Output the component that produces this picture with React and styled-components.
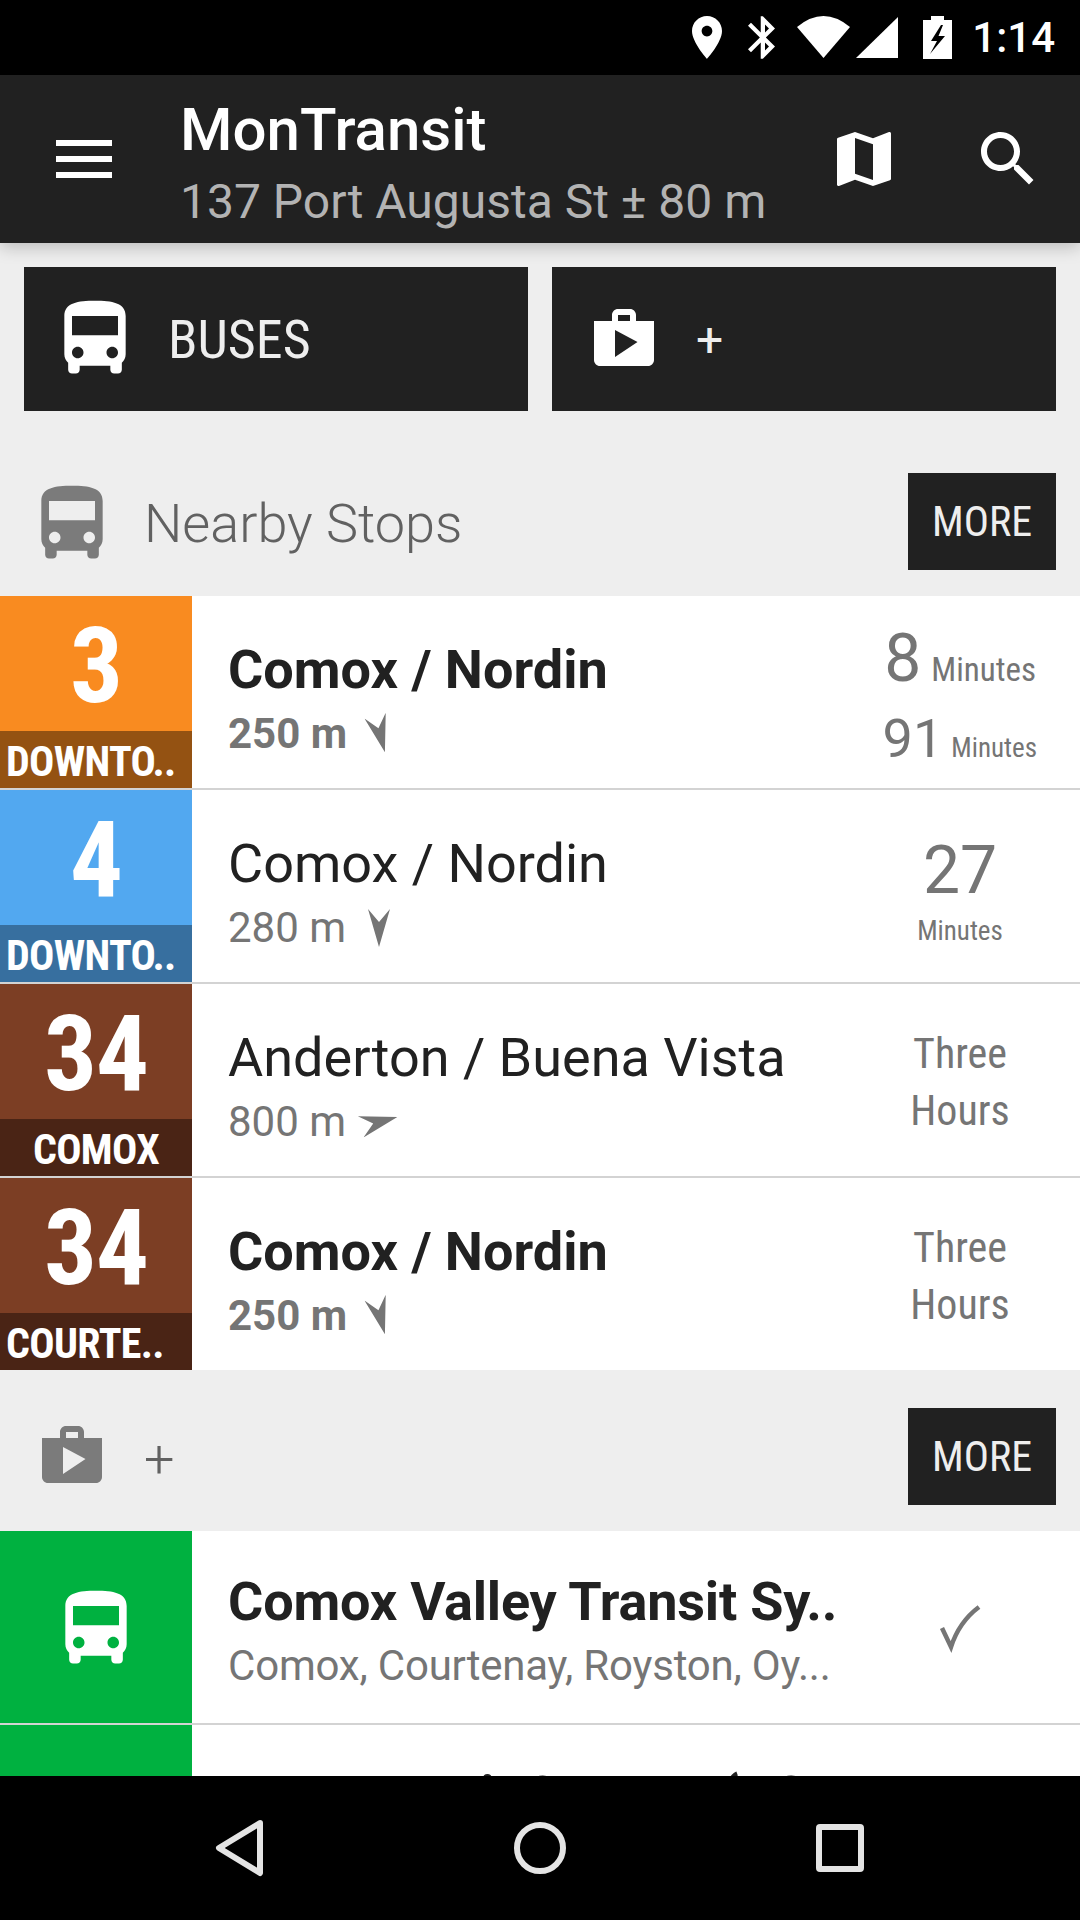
import React from "react";
import styled, { createGlobalStyle } from "styled-components";

const busPath =
  "M4 16c0 .88.39 1.67 1 2.22V20c0 .55.45 1 1 1h1c.55 0 1-.45 1-1v-1h8v1c0 .55.45 1 1 1h1c.55 0 1-.45 1-1v-1.78c.61-.55 1-1.34 1-2.22V6c0-3.5-3.58-4-8-4s-8 .5-8 4v10zm3.5 1c-.83 0-1.5-.67-1.5-1.5S6.67 14 7.5 14s1.5.67 1.5 1.5S8.33 17 7.5 17zm9 0c-.83 0-1.5-.67-1.5-1.5s.67-1.5 1.5-1.5 1.5.67 1.5 1.5-.67 1.5-1.5 1.5zm1.5-6H6V6h12v5z";
const shopPath =
  "M16 6V4c0-1.11-.89-2-2-2h-4c-1.11 0-2 .89-2 2v2H2v13c0 1.11.89 2 2 2h16c1.11 0 2-.89 2-2V6h-6zm-6-2h4v2h-4V4zM9 18V9l7.5 4L9 18z";

function BusIcon({ color }) {
  return (
    <svg width="92" height="92" viewBox="0 0 24 24" fill={color}>
      <path d={busPath} />
    </svg>
  );
}

function ShopIcon({ color }) {
  return (
    <svg width="72" height="72" viewBox="0 0 24 24" fill={color}>
      <path d={shopPath} />
    </svg>
  );
}

function Arrow({ angle }) {
  return (
    <ArrowSvg $angle={angle} width="22" height="38" viewBox="0 0 22 38" fill="#757575">
      <path d="M0 0 L11 38 L22 0 L11 13 Z" />
    </ArrowSvg>
  );
}

function Row({ route, label, labelAlign, color, dark, title, bold, distance, angle, last, children }) {
  return (
    <RowWrapper $last={last}>
      <RouteCell>
        <RouteNumber $bg={color}>
          <Condensed>{route}</Condensed>
        </RouteNumber>
        <RouteLabel $bg={dark} $align={labelAlign}>
          <Condensed>{label}</Condensed>
        </RouteLabel>
      </RouteCell>
      <RowText>
        <RowTitle $bold={bold}>{title}</RowTitle>
        <RowSub $bold={bold}>
          {distance}
          <Arrow angle={angle} />
        </RowSub>
      </RowText>
      <TimeCell>{children}</TimeCell>
    </RowWrapper>
  );
}

export default function App() {
  return (
    <Page>
      <GlobalStyle />
      <StatusBar>
        <StatusGlyph width="30" height="43" viewBox="5 2 14 20">
          <path d="M12 2C8.13 2 5 5.13 5 9c0 5.25 7 13 7 13s7-7.75 7-13c0-3.87-3.13-7-7-7zm0 9.5c-1.38 0-2.5-1.12-2.5-2.5s1.12-2.5 2.5-2.5 2.5 1.12 2.5 2.5-1.12 2.5-2.5 2.5z" />
        </StatusGlyph>
        <StatusGlyph $gap={26} width="27" height="43" viewBox="5 2 12.71 20">
          <path d="M17.71 7.71L12 2h-1v7.59L6.41 5 5 6.41 10.59 12 5 17.59 6.41 19 11 14.41V22h1l5.71-5.71-4.3-4.29 4.3-4.29zM13 5.83l1.88 1.88L13 9.59V5.83zm1.88 10.46L13 18.17v-3.76l1.88 1.88z" />
        </StatusGlyph>
        <StatusGlyph $gap={22} width="53" height="42" viewBox="0 0 53 42">
          <path d="M0 11 Q26.500 -11 53 11 L26.500 42 Z" />
        </StatusGlyph>
        <StatusGlyph $gap={6} width="42" height="41" viewBox="0 0 42 41">
          <path d="M42 0 V41 H0 Z" />
        </StatusGlyph>
        <StatusGlyph $gap={25} width="29" height="43" viewBox="0 0 29 43">
          <path
            fillRule="evenodd"
            d="M8 0 H21 V4 H29 V43 H0 V4 H8 Z M18 9 L8 25 H14 L7 38 L22 20 H15.500 L20 9 Z"
          />
        </StatusGlyph>
        <Clock>1:14</Clock>
      </StatusBar>

      <Toolbar>
        <MenuIcon>
          <span />
          <span />
          <span />
        </MenuIcon>
        <ToolbarTitles>
          <AppName>MonTransit</AppName>
          <Location>137 Port Augusta St ± 80 m</Location>
        </ToolbarTitles>
        <ToolbarActions>
          <svg width="72" height="72" viewBox="0 0 24 24" fill="#fff">
            <path d="M20.5 3l-.16.03L15 5.100 9 3 3.360 4.900c-.21.07-.36.25-.36.48V20.500c0 .28.22.5.5.5l.16-.03L9 18.900l6 2.100 5.640-1.900c.21-.07.36-.25.36-.48V3.500c0-.28-.22-.5-.5-.5zM15 19l-6-2.110V5l6 2.110V19z" />
          </svg>
          <svg width="72" height="72" viewBox="0 0 24 24" fill="#fff">
            <path d="M15.500 14h-.79l-.28-.27C15.410 12.590 16 11.110 16 9.500 16 5.910 13.090 3 9.500 3S3 5.910 3 9.500 5.910 16 9.500 16c1.610 0 3.090-.59 4.230-1.570l.27.28v.79l5 4.990L20.490 19l-4.990-5zm-6 0C7.010 14 5 11.990 5 9.500S7.010 5 9.500 5 14 7.010 14 9.500 11.990 14 9.500 14z" />
          </svg>
        </ToolbarActions>
      </Toolbar>

      <Content>
        <TypeButtons>
          <TypeButton $pad={25}>
            <BusIcon color="#fff" />
            <TypeLabel>
              <Condensed>BUSES</Condensed>
            </TypeLabel>
          </TypeButton>
          <TypeButton $pad={36}>
            <ShopIcon color="#fff" />
            <TypePlus>+</TypePlus>
          </TypeButton>
        </TypeButtons>

        <SectionHeader>
          <SectionLabel>
            <BusIcon color="#7b7b7b" />
            <SectionTitle>Nearby Stops</SectionTitle>
          </SectionLabel>
          <MoreButton>
            <Condensed>MORE</Condensed>
          </MoreButton>
        </SectionHeader>

        <Row
          route="3"
          label="DOWNTO.."
          color="#f98b20"
          dark="#945212"
          title="Comox / Nordin"
          bold
          distance="250 m"
          angle={-15}
        >
          <TimeLine>
            <BigNumber>8</BigNumber>
            <SmallUnit>
              <Condensed>Minutes</Condensed>
            </SmallUnit>
          </TimeLine>
          <TimeLine $second>
            <SecondNumber>91</SecondNumber>
            <TinyUnit>
              <Condensed>Minutes</Condensed>
            </TinyUnit>
          </TimeLine>
        </Row>
        <Row
          route="4"
          label="DOWNTO.."
          color="#52a8f0"
          dark="#376f9f"
          title="Comox / Nordin"
          distance="280 m"
          angle={0}
        >
          <StackNumber>27</StackNumber>
          <TinyUnit>
            <Condensed>Minutes</Condensed>
          </TinyUnit>
        </Row>
        <Row
          route="34"
          label="COMOX"
          labelAlign="center"
          color="#7c3e24"
          dark="#4a2415"
          title="Anderton / Buena Vista"
          distance="800 m"
          angle={-105}
        >
          <WordTime>
            <Condensed>Three</Condensed>
          </WordTime>
          <WordTime>
            <Condensed>Hours</Condensed>
          </WordTime>
        </Row>
        <Row
          route="34"
          label="COURTE.."
          color="#7c3e24"
          dark="#4a2415"
          title="Comox / Nordin"
          bold
          distance="250 m"
          angle={-15}
          last
        >
          <WordTime>
            <Condensed>Three</Condensed>
          </WordTime>
          <WordTime>
            <Condensed>Hours</Condensed>
          </WordTime>
        </Row>

        <SectionHeader $second>
          <ShopSlot>
            <ShopIcon color="#7b7b7b" />
          </ShopSlot>
          <SectionPlus>+</SectionPlus>
          <MoreButton>
            <Condensed>MORE</Condensed>
          </MoreButton>
        </SectionHeader>

        <RowWrapper>
          <AgencyCell>
            <BusIcon color="#fff" />
          </AgencyCell>
          <RowText $agency>
            <AgencyTitle>Comox Valley Transit Sy..</AgencyTitle>
            <AgencySub>Comox, Courtenay, Royston, Oy...</AgencySub>
          </RowText>
          <TimeCell>
            <svg width="44" height="50" viewBox="0 0 44 50" fill="none" stroke="#757575" strokeWidth="4.500">
              <path d="M4 24 L13 43 Q21 18 41 3" />
            </svg>
          </TimeCell>
        </RowWrapper>
        <RowWrapper>
          <AgencyCell />
          <RowText $agency>
            <AgencyTitle>BBU Transit System (BC</AgencyTitle>
            <AgencySub>Comox, Courtenay</AgencySub>
          </RowText>
          <TimeCell />
        </RowWrapper>
      </Content>

      <NavBar>
        <NavSlot>
          <svg width="54" height="60" viewBox="0 0 54 60" fill="none" stroke="#e4e4e4" strokeWidth="6" strokeLinejoin="round">
            <path d="M47 5 L6 30 L47 55 Z" />
          </svg>
        </NavSlot>
        <NavSlot>
          <svg width="54" height="54" viewBox="0 0 54 54" fill="none" stroke="#e4e4e4" strokeWidth="6">
            <circle cx="27" cy="27" r="23" />
          </svg>
        </NavSlot>
        <NavSlot>
          <svg width="48" height="48" viewBox="0 0 48 48" fill="none" stroke="#e4e4e4" strokeWidth="6" strokeLinejoin="round">
            <rect x="3" y="3" width="42" height="42" rx="1" />
          </svg>
        </NavSlot>
      </NavBar>
    </Page>
  );
}

const GlobalStyle = createGlobalStyle`
  html, body {
    margin: 0;
    padding: 0;
    background: #000;
  }
  * {
    box-sizing: border-box;
  }
`;

const Page = styled.div`
  width: 1080px;
  height: 1920px;
  display: flex;
  flex-direction: column;
  overflow: hidden;
  background: #eeeeee;
  font-family: Roboto, "Noto Sans", sans-serif;
`;

const Condensed = styled.span`
  display: inline-block;
  font-stretch: 75%;
  white-space: nowrap;
`;

const StatusBar = styled.div`
  height: 75px;
  flex: none;
  background: #000;
  display: flex;
  align-items: center;
  justify-content: flex-end;
  padding: 0 25px 0 0;
`;

const StatusGlyph = styled.svg`
  fill: #fff;
  margin-left: ${(p) => p.$gap || 0}px;
  margin-top: -1px;
`;

const Clock = styled.span`
  margin-left: 20px;
  color: #fff;
  font-size: 42px;
  font-weight: 500;
  line-height: 75px;
`;

const Toolbar = styled.div`
  height: 168px;
  flex: none;
  position: relative;
  z-index: 2;
  background: #212121;
  display: flex;
  align-items: center;
  box-shadow: 0 4px 16px rgba(0, 0, 0, 0.22);
`;

const MenuIcon = styled.div`
  width: 56px;
  margin-left: 56px;
  display: flex;
  flex-direction: column;
  gap: 10px;
  span {
    display: block;
    height: 6px;
    background: #fff;
  }
`;

const ToolbarTitles = styled.div`
  margin-left: 68px;
  padding-top: 14px;
  display: flex;
  flex-direction: column;
`;

const AppName = styled.div`
  color: #fff;
  font-size: 60px;
  font-weight: 500;
  line-height: 71px;
`;

const Location = styled.div`
  color: #b3b3b3;
  font-size: 48px;
  line-height: 73px;
`;

const ToolbarActions = styled.div`
  margin-left: auto;
  padding-right: 36px;
  display: flex;
  gap: 72px;
`;

const Content = styled.div`
  flex: 1;
  min-height: 0;
  overflow: hidden;
`;

const TypeButtons = styled.div`
  display: grid;
  grid-template-columns: 1fr 1fr;
  gap: 24px;
  padding: 24px 24px 0;
`;

const TypeButton = styled.div`
  height: 144px;
  background: #212121;
  display: flex;
  align-items: center;
  padding-left: ${(p) => p.$pad}px;
`;

const TypeLabel = styled.span`
  margin-left: 27px;
  color: #eeeeee;
  font-size: 54px;
`;

const TypePlus = styled.span`
  margin-left: 36px;
  color: #eeeeee;
  font-size: 48px;
`;

const SectionHeader = styled.div`
  height: ${(p) => (p.$second ? 161 : 185)}px;
  display: flex;
  align-items: center;
  padding: ${(p) => (p.$second ? "11px 24px 0 36px" : "36px 24px 0 26px")};
`;

const SectionLabel = styled.div`
  display: flex;
  align-items: center;
  margin-top: 4px;
`;

const ShopSlot = styled.div`
  display: flex;
`;

const SectionTitle = styled.span`
  margin-left: 26px;
  color: #616161;
  font-size: 54px;
  font-weight: 300;
`;

const SectionPlus = styled.span`
  margin-left: 36px;
  margin-top: 6px;
  color: #616161;
  font-size: 54px;
  font-weight: 300;
`;

const MoreButton = styled.div`
  margin-left: auto;
  width: 148px;
  height: 97px;
  background: #212121;
  color: #eeeeee;
  font-size: 42px;
  display: flex;
  align-items: center;
  justify-content: center;
`;

const RowWrapper = styled.div`
  height: ${(p) => (p.$last ? 192 : 194)}px;
  display: grid;
  grid-template-columns: 192px 1fr 240px;
  background: #fff;
  border-bottom: ${(p) => (p.$last ? "none" : "2px solid #d3d3d3")};
`;

const RouteCell = styled.div`
  display: flex;
  flex-direction: column;
  color: #fff;
`;

const RouteNumber = styled.div`
  height: 135px;
  padding-top: 5px;
  background: ${(p) => p.$bg};
  font-size: 105px;
  font-weight: 700;
  letter-spacing: -1px;
  display: flex;
  align-items: center;
  justify-content: center;
`;

const RouteLabel = styled.div`
  flex: 1;
  background: ${(p) => p.$bg};
  font-size: 42px;
  font-weight: 700;
  letter-spacing: -0.7px;
  display: flex;
  align-items: center;
  overflow: hidden;
  padding: ${(p) => (p.$align === "center" ? "4px 0 0" : "4px 0 0 6px")};
  justify-content: ${(p) => (p.$align === "center" ? "center" : "flex-start")};
`;

const AgencyCell = styled.div`
  background: #00b140;
  padding-top: 3px;
  display: flex;
  align-items: center;
  justify-content: center;
`;

const RowText = styled.div`
  min-width: 0;
  padding: ${(p) => (p.$agency ? "12px" : "18px")} 0 0 36px;
  display: flex;
  flex-direction: column;
  justify-content: center;
  white-space: nowrap;
`;

const RowTitle = styled.div`
  color: #212121;
  font-size: 54px;
  line-height: 66px;
  font-weight: ${(p) => (p.$bold ? 700 : 400)};
`;

const AgencyTitle = styled.div`
  color: #212121;
  font-size: 54px;
  line-height: 64px;
  font-weight: 700;
  letter-spacing: -0.2px;
`;

const RowSub = styled.div`
  color: #757575;
  font-size: 42px;
  line-height: 62px;
  font-weight: ${(p) => (p.$bold ? 700 : 400)};
  display: flex;
  align-items: center;
`;

const AgencySub = styled.div`
  color: #757575;
  font-size: 42px;
  line-height: 62px;
  letter-spacing: -0.2px;
  margin-top: 1px;
`;

const ArrowSvg = styled.svg`
  margin-left: 22px;
  transform: rotate(${(p) => p.$angle}deg);
`;

const TimeCell = styled.div`
  color: #757575;
  padding-top: 3px;
  display: flex;
  flex-direction: column;
  align-items: center;
  justify-content: center;
`;

const TimeLine = styled.div`
  width: 100%;
  display: flex;
  align-items: baseline;
  justify-content: flex-end;
  padding-right: 43px;
  margin-top: ${(p) => (p.$second ? 9 : 4)}px;
`;

const BigNumber = styled.span`
  font-size: 66px;
  line-height: 78px;
`;

const SecondNumber = styled.span`
  font-size: 54px;
  line-height: 64px;
  margin-right: 8px;
`;

const SmallUnit = styled.span`
  margin-left: 10px;
  margin-right: 1px;
  font-size: 33px;
`;

const TinyUnit = styled.span`
  font-size: 27px;
`;

const StackNumber = styled.span`
  font-size: 66px;
  line-height: 78px;
  margin: 3px 0 5px;
`;

const WordTime = styled.span`
  font-size: 42px;
  line-height: 57px;
`;

const NavBar = styled.div`
  height: 144px;
  flex: none;
  background: #000;
  display: flex;
  align-items: center;
  justify-content: center;
`;

const NavSlot = styled.div`
  width: 300px;
  display: flex;
  align-items: center;
  justify-content: center;
`;
